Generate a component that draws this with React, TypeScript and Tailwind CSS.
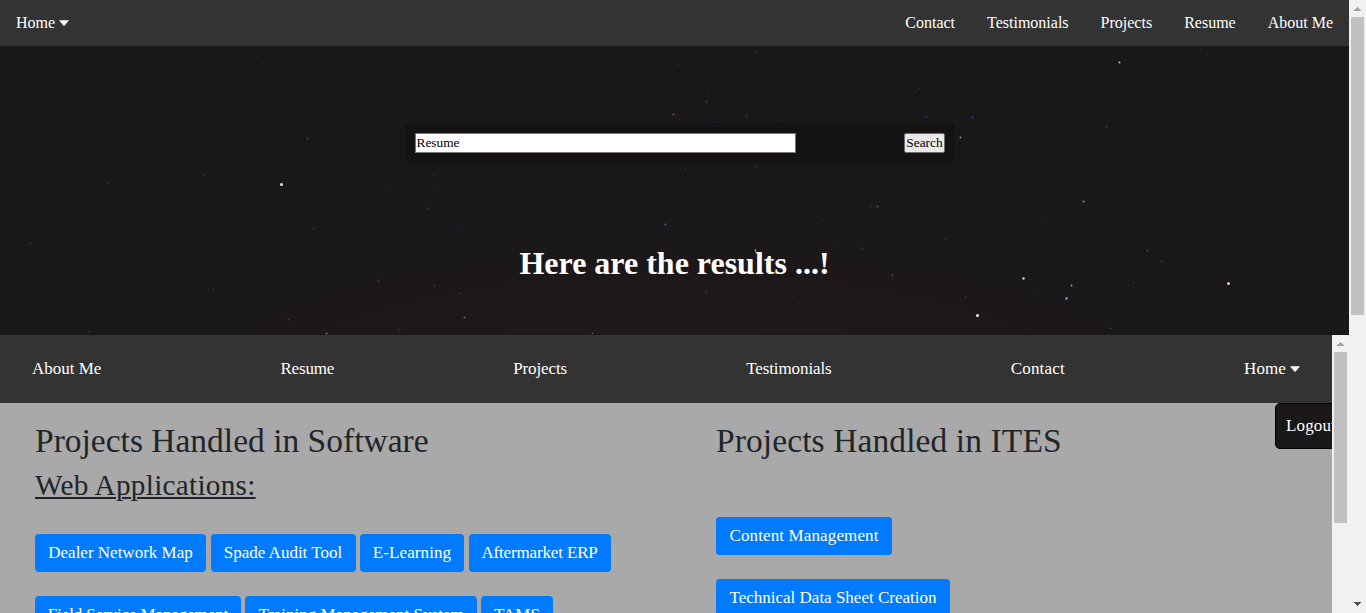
type Star = [number, number, number, string];

const stars: Star[] = [
  [281, 184, 3, "#e8e8e8"], [307, 138, 1.5, "#77505f"], [204, 175, 1.5, "#34346a"], [108, 183, 1.5, "#403c60"],
  [262, 62, 2, "#29282a"], [266, 86, 1.5, "#2b2929"], [389, 188, 2, "#28272b"],
  [433, 174, 2, "#2a292b"], [433, 186, 2, "#2a292b"], [673, 114, 2, "#8a5043"], [746, 116, 2, "#53302f"],
  [706, 101, 2, "#3a3944"], [707, 93, 1.5, "#373637"], [714, 122, 1.5, "#2b2a60"], [778, 127, 1.5, "#29284c"],
  [581, 132, 1.5, "#2b2a60"], [685, 168, 2, "#2d2c2d"], [755, 166, 2, "#353435"], [877, 206, 2, "#5a5a5a"],
  [871, 206, 1.5, "#39383a"], [865, 186, 1.5, "#2a292b"], [816, 223, 1.5, "#302f30"], [838, 240, 1.5, "#29284c"],
  [458, 228, 1.5, "#2b2a62"], [665, 224, 2, "#555488"], [755, 250, 2, "#aaa4b0"], [862, 248, 2, "#33339b"],
  [892, 275, 2, "#484749"], [706, 292, 2, "#3c3a3b"], [792, 297, 1.5, "#313057"],
  [755, 52, 2, "#3a393a"], [678, 65, 1.5, "#373637"], [1119, 62, 2, "#9ccbff"], [1207, 53, 1.5, "#303087"],
  [926, 116, 2, "#31318f"], [972, 117, 2, "#3334c4"], [960, 137, 2, "#898593"], [1106, 126, 1.5, "#5a5857"],
  [993, 154, 1.5, "#26265a"], [919, 88, 1.5, "#373637"], [1083, 201, 2, "#b08480"], [956, 212, 1.5, "#29283f"],
  [1042, 220, 1.5, "#29284c"], [945, 239, 2, "#302d2f"], [1147, 250, 1.5, "#5e6460"], [1161, 261, 2, "#403e40"],
  [1023, 278, 2.5, "#c9c5ff"], [1071, 285, 2, "#bd8275"], [1066, 298, 2.3, "#afaaff"], [1133, 282, 1.5, "#333270"],
  [1228, 283, 3, "#e7c8b9"], [977, 315, 3, "#f4f4f4"], [965, 296, 1.5, "#454345"], [1032, 294, 1.5, "#302c2c"],
  [1110, 328, 1.5, "#4b4578"], [1030, 330, 1.5, "#302c2c"], [30, 243, 2, "#302e68"], [27, 259, 1.5, "#29282a"],
  [213, 289, 1.5, "#37377b"], [313, 228, 2, "#532f35"], [427, 208, 2, "#3b3a3b"], [378, 280, 2, "#503739"],
  [434, 285, 2, "#383436"], [459, 293, 2, "#39373a"], [464, 317, 2, "#965463"], [326, 333, 2, "#a95b64"],
  [288, 319, 1.5, "#47404a"], [89, 331, 2, "#4e2b2d"], [399, 329, 2, "#363235"], [592, 333, 1.5, "#655c70"],
];

function Sky() {
  return (
    <svg className="absolute inset-0 h-full w-full" viewBox="0 0 1349 335" aria-hidden="true">
      <defs>
        <radialGradient id="haze" cx="0.5" cy="1.1" r="0.5">
          <stop offset="0" stopColor="#3a2020" stopOpacity="0.2" />
          <stop offset="1" stopColor="#3a2020" stopOpacity="0" />
        </radialGradient>
      </defs>
      <rect width="1349" height="335" fill="url(#haze)" />
      {stars.map(([x, y, size, color], i) => (
        <circle key={i} cx={x + 0.5} cy={y + 0.5} r={size / 2} fill={color} />
      ))}
    </svg>
  );
}

function Caret() {
  return (
    <svg className="relative -top-px ml-1 inline-block h-[6px] w-[10px]" viewBox="0 0 10 6" aria-hidden="true">
      <path d="M0 0.2h10L5.6 5.4q-.6.6-1.2 0z" fill="white" />
    </svg>
  );
}

function ScrollUp() {
  return (
    <svg className="h-[17px] w-[17px] shrink-0" viewBox="0 0 17 17" shapeRendering="crispEdges" aria-hidden="true">
      <path d="M5 11h7v-1h-1v-1h-1v-1h-1v-1h-1v1h-1v1h-1v1h-1z" fill="#a3a3a3" />
    </svg>
  );
}

function ScrollDown() {
  return (
    <svg className="h-[17px] w-[17px] shrink-0" viewBox="0 0 17 17" shapeRendering="crispEdges" aria-hidden="true">
      <path d="M5 6h7v1h-1v1h-1v1h-1v1h-1v-1h-1v-1h-1v-1h-1z" fill="#505050" />
    </svg>
  );
}

function Project({ name, className }: { name: string; className: string }) {
  return (
    <button className={`h-[38px] shrink-0 rounded-[4px] bg-[#007bff] text-center text-[17px] leading-[36px] whitespace-nowrap text-white ${className}`}>
      {name}
    </button>
  );
}

const dots = "bg-[#1b191a] bg-[repeating-conic-gradient(#161415_0_25%,#1d1b1c_0_50%)] bg-[length:2px_2px]";

export default function App() {
  return (
    <div className="flex h-[613px] w-[1366px] overflow-hidden bg-[#f1f1f1] font-['Liberation_Serif',serif]">
      <div className="flex w-[1349px] shrink-0 flex-col">
        <header className={`relative h-[335px] shrink-0 ${dots}`}>
          <Sky />
          <nav className="relative flex h-[46px] items-center justify-between bg-[#333] px-4 text-base leading-[46px] text-white">
            <a>Home<Caret /></a>
            <div className="flex gap-8">
              <a>Contact</a>
              <a>Testimonials</a>
              <a>Projects</a>
              <a>Resume</a>
              <a>About Me</a>
            </div>
          </nav>
          <form className="relative mt-[77px] ml-[405px] flex h-10 w-[550px] items-center justify-between rounded-[5px] bg-black/20 p-[10px] text-[13.333px]">
            <input
              className="h-5 w-[381px] border border-[#767676] bg-white px-[0.5px] text-black outline-none"
              defaultValue="Resume"
            />
            <button type="button" className="h-5 w-[41px] rounded-[2px] border border-[#6b6b6b] bg-[#e9e9e9] leading-[18px] text-black">
              Search
            </button>
          </form>
          <h1 className="relative mt-[82px] text-center text-[32px] leading-[37px] font-bold text-white">
            Here are the results ...!
          </h1>
        </header>

        <div className="flex min-h-0 flex-1">
          <main className="relative w-[1332px] shrink-0 overflow-hidden bg-[#a9a9a9] text-[#212529]">
            <nav className="flex h-[68px] items-center justify-between bg-[#333] px-8 text-[17px] leading-[68px] text-white">
              <a>About Me</a>
              <a className="tracking-[-0.2px]">Resume</a>
              <a className="tracking-[-0.1px]">Projects</a>
              <a className="tracking-[-0.1px]">Testimonials</a>
              <a className="tracking-[0.2px]">Contact</a>
              <a className="tracking-[0.1px]">Home<Caret /></a>
            </nav>
            <div className={`absolute top-[68px] left-[1275px] h-[46px] w-[80px] rounded-[5px] border border-black pl-[10px] text-[17px] leading-[44px] tracking-[0.15px] text-white ${dots}`}>
              Logout
            </div>
            <div className="flex pl-[35px]">
              <section className="w-[681px] shrink-0">
                <h2 className="mt-[18px] text-[33.5px] leading-[40px]">Projects Handled in Software</h2>
                <h3 className="mt-[6px] text-[29.2px] leading-[36px] tracking-[0.29px] underline decoration-2 underline-offset-[2px]">Web Applications:</h3>
                <div className="mt-[31px] flex gap-[4.5px]">
                  <Project name="Dealer Network Map" className="w-[171px]" />
                  <Project name="Spade Audit Tool" className="w-[145px]" />
                  <Project name="E-Learning" className="w-[104px] tracking-[0.1px]" />
                  <Project name="Aftermarket ERP" className="w-[142px] tracking-[-0.15px]" />
                </div>
                <div className="mt-6 flex gap-1">
                  <Project name="Field Service Management" className="w-[206px] tracking-[-0.12px]" />
                  <Project name="Training Management System" className="w-[232px]" />
                  <Project name="TAMS" className="w-[72px]" />
                </div>
              </section>
              <section>
                <h2 className="mt-[18px] text-[33.5px] leading-[40px] tracking-[0.1px]">Projects Handled in ITES</h2>
                <div className="mt-[56px] flex flex-col items-start gap-6">
                  <Project name="Content Management" className="w-[176px] tracking-[0.13px]" />
                  <Project name="Technical Data Sheet Creation" className="w-[234px]" />
                </div>
              </section>
            </div>
          </main>
          <div className="flex w-[17px] flex-col items-center bg-[#f1f1f1]">
            <ScrollUp />
            <div className="h-[171px] w-[13px] bg-[#c1c1c1]" />
          </div>
        </div>
      </div>
      <div className="flex w-[17px] flex-col items-center justify-between bg-[#f1f1f1]">
        <div className="flex flex-col items-center">
          <ScrollUp />
          <div className="h-[298px] w-[13px] bg-[#c1c1c1]" />
        </div>
        <ScrollDown />
      </div>
    </div>
  );
}
